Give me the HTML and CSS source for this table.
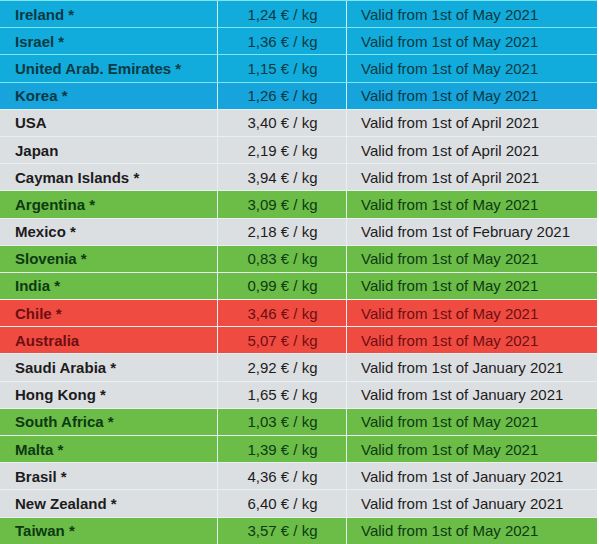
FILE: index.html
```html
<!DOCTYPE html>
<html>
<head>
<meta charset="utf-8">
<link rel="stylesheet" href="styles.css">
</head>
<body>
<div class="table">
  <div class="row blue"><div class="cell country">Ireland *</div><div class="cell price">1,24 € / kg</div><div class="cell valid">Valid from 1st of May 2021</div></div>
  <div class="row blue"><div class="cell country">Israel *</div><div class="cell price">1,36 € / kg</div><div class="cell valid">Valid from 1st of May 2021</div></div>
  <div class="row blue"><div class="cell country">United Arab. Emirates *</div><div class="cell price">1,15 € / kg</div><div class="cell valid">Valid from 1st of May 2021</div></div>
  <div class="row blue2"><div class="cell country">Korea *</div><div class="cell price">1,26 € / kg</div><div class="cell valid">Valid from 1st of May 2021</div></div>
  <div class="row gray"><div class="cell country">USA</div><div class="cell price">3,40 € / kg</div><div class="cell valid">Valid from 1st of April 2021</div></div>
  <div class="row gray"><div class="cell country">Japan</div><div class="cell price">2,19 € / kg</div><div class="cell valid">Valid from 1st of April 2021</div></div>
  <div class="row gray"><div class="cell country">Cayman Islands *</div><div class="cell price">3,94 € / kg</div><div class="cell valid">Valid from 1st of April 2021</div></div>
  <div class="row green"><div class="cell country">Argentina *</div><div class="cell price">3,09 € / kg</div><div class="cell valid">Valid from 1st of May 2021</div></div>
  <div class="row gray"><div class="cell country">Mexico *</div><div class="cell price">2,18 € / kg</div><div class="cell valid">Valid from 1st of February 2021</div></div>
  <div class="row green"><div class="cell country">Slovenia *</div><div class="cell price">0,83 € / kg</div><div class="cell valid">Valid from 1st of May 2021</div></div>
  <div class="row green"><div class="cell country">India *</div><div class="cell price">0,99 € / kg</div><div class="cell valid">Valid from 1st of May 2021</div></div>
  <div class="row red"><div class="cell country">Chile *</div><div class="cell price">3,46 € / kg</div><div class="cell valid">Valid from 1st of May 2021</div></div>
  <div class="row red"><div class="cell country">Australia</div><div class="cell price">5,07 € / kg</div><div class="cell valid">Valid from 1st of May 2021</div></div>
  <div class="row gray"><div class="cell country">Saudi Arabia *</div><div class="cell price">2,92 € / kg</div><div class="cell valid">Valid from 1st of January 2021</div></div>
  <div class="row gray"><div class="cell country">Hong Kong *</div><div class="cell price">1,65 € / kg</div><div class="cell valid">Valid from 1st of January 2021</div></div>
  <div class="row green"><div class="cell country">South Africa *</div><div class="cell price">1,03 € / kg</div><div class="cell valid">Valid from 1st of May 2021</div></div>
  <div class="row green"><div class="cell country">Malta *</div><div class="cell price">1,39 € / kg</div><div class="cell valid">Valid from 1st of May 2021</div></div>
  <div class="row gray"><div class="cell country">Brasil *</div><div class="cell price">4,36 € / kg</div><div class="cell valid">Valid from 1st of January 2021</div></div>
  <div class="row gray"><div class="cell country">New Zealand *</div><div class="cell price">6,40 € / kg</div><div class="cell valid">Valid from 1st of January 2021</div></div>
  <div class="row green"><div class="cell country">Taiwan *</div><div class="cell price">3,57 € / kg</div><div class="cell valid">Valid from 1st of May 2021</div></div>
</div>
</body>
</html>
```

FILE: styles.css
```css
html, body {
  margin: 0;
  padding: 0;
  background: #ffffff;
}
.table {
  width: 597px;
  display: flex;
  flex-direction: column;
  font-family: "Liberation Sans", Arial, sans-serif;
  font-size: 15px;
}
.row {
  display: grid;
  grid-template-columns: 218px 129px 1fr;
  height: 27.2px;
  box-sizing: border-box;
  border-top: 1px solid #e6f2f2;
}
.cell {
  display: flex;
  align-items: center;
  box-sizing: border-box;
  border-right: 1px solid #e6f2f2;
  white-space: nowrap;
}
.cell:last-child { border-right: none; }
.country {
  font-weight: bold;
  padding-left: 15px;
}
.price {
  justify-content: center;
  padding-left: 1px;
}
.valid {
  padding-left: 14px;
}
.blue { background: #12acdc; color: #0a3a44; border-top-color: #7fe6ee; }
.blue .cell { border-right-color: #c8f4f8; }
.blue2 { background: #17a3dc; color: #0a3a44; border-top-color: #7fe6ee; }
.blue2 .cell { border-right-color: #c8f4f8; }
.gray { background: #dcdfe2; color: #1c1c1c; }
.green { background: #6cbc48; color: #0c3a12; }
.red { background: #f04b41; color: #6e0e12; }
```
